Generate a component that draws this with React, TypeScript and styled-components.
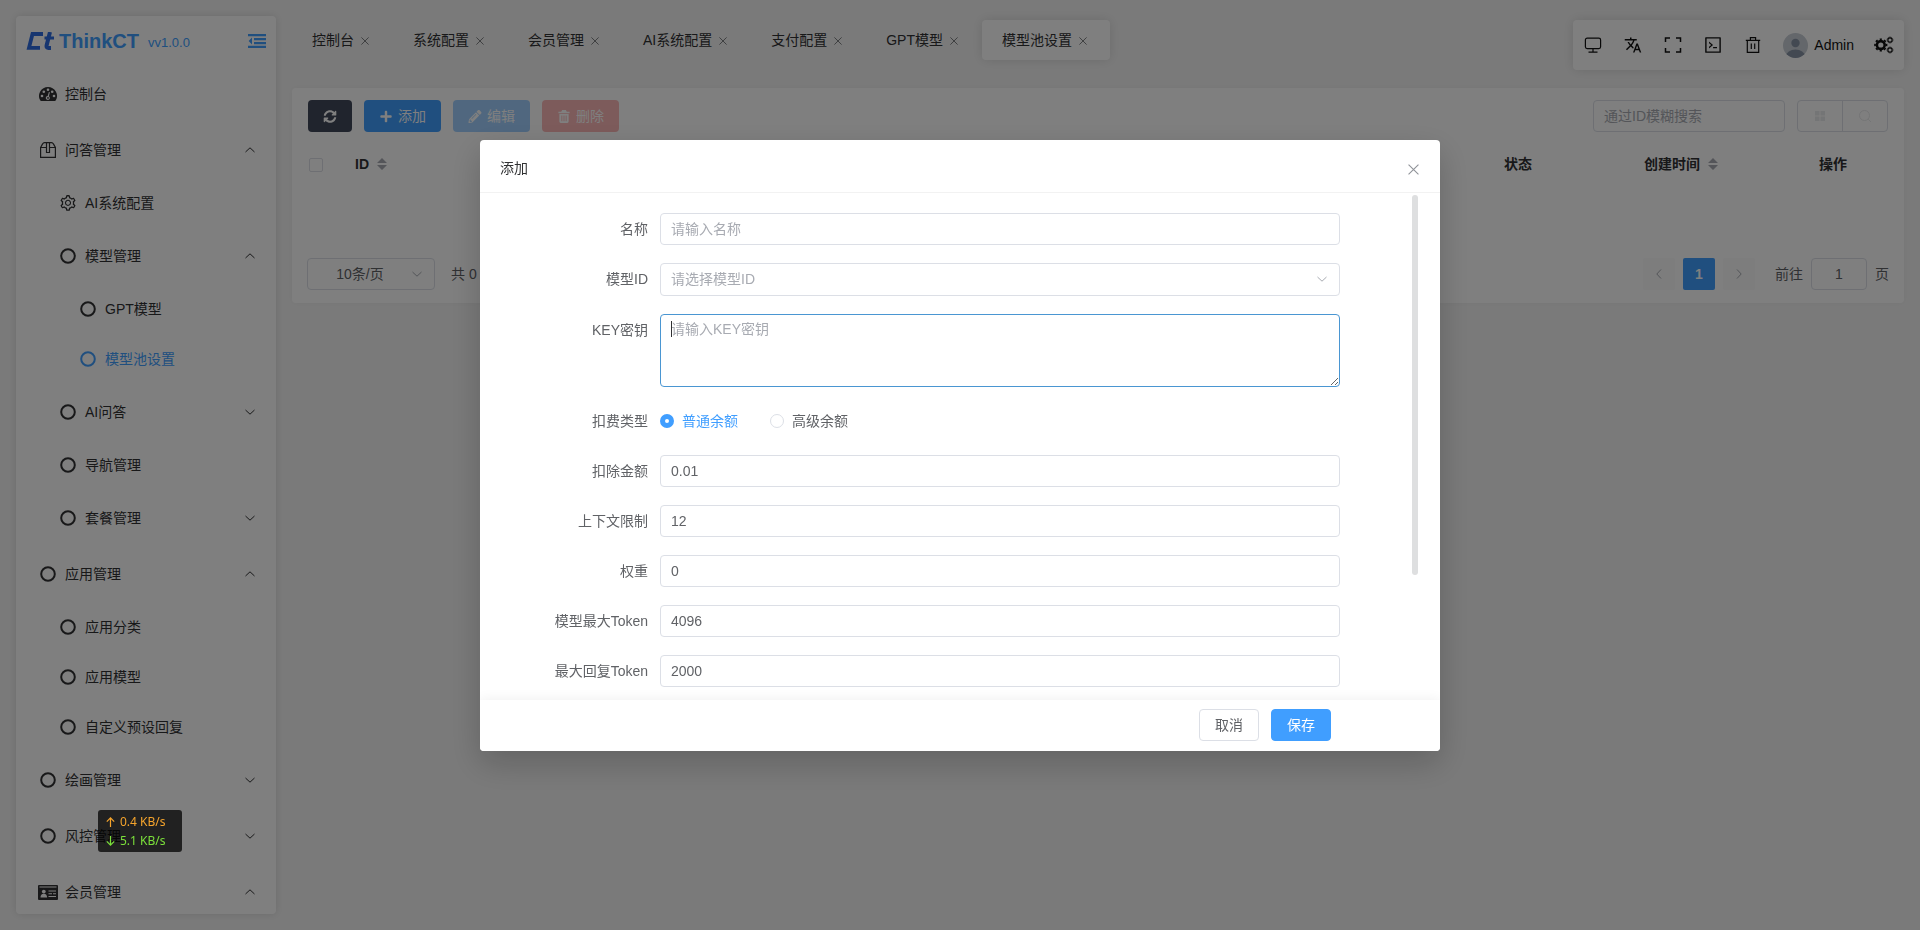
import React from 'react';
import styled, { createGlobalStyle, css } from 'styled-components';
import { FaPencilAlt, FaPlus, FaSyncAlt } from 'react-icons/fa';
import { AiOutlineCode, AiOutlineSetting } from 'react-icons/ai';
import { MdTranslate } from 'react-icons/md';

const color = {
  primary: '#409eff',
  text: '#303133',
  regular: '#606266',
  placeholder: '#a8abb2',
  border: '#dcdfe6',
  page: '#f5f5f5',
  card: '#ffffff',
};

const GlobalStyle = createGlobalStyle`
  *, *::before, *::after { box-sizing: border-box; }
  body {
    margin: 0;
    background: ${color.page};
    color: ${color.text};
    font: 14px/20px "Liberation Sans", "Noto Sans CJK SC", sans-serif;
  }
  button, input, select, textarea { font: inherit; color: inherit; margin: 0; }
  button { cursor: pointer; }
  a { color: inherit; text-decoration: none; }
`;

/* ---------- page shell ---------- */

const Shell = styled.div`
  display: grid;
  grid-template-columns: 260px minmax(0, 1fr);
  gap: 16px;
  height: 100vh;
  padding: 16px;
  overflow: hidden;
`;

const Sidebar = styled.aside`
  min-height: 0;
  overflow: hidden;
  background: ${color.card};
  border-radius: 4px;
  box-shadow: 0 0 8px rgba(0, 0, 0, 0.12);
`;

const Brand = styled.div`
  display: flex;
  align-items: center;
  height: 50px;
  padding: 0 10px;
  color: ${color.primary};
`;

const BrandName = styled.span`
  margin-left: 5px;
  font-size: 20px;
  font-weight: 700;
`;

const BrandVersion = styled.span`
  margin: 4px auto 0 9px;
  font-size: 13px;
`;

const IconButton = styled.button`
  display: inline-flex;
  align-items: center;
  justify-content: center;
  padding: 0;
  border: 0;
  background: none;
`;

const Menu = styled.ul`
  margin: 0;
  padding: 0;
  list-style: none;
`;

const MenuLink = styled.a<{ $level: number; $tall: boolean; $active?: boolean }>`
  display: flex;
  align-items: center;
  gap: 5px;
  height: ${(p) => (p.$tall ? 56 : 50)}px;
  padding: 0 20px 0 ${(p) => p.$level * 20}px;
  color: ${(p) => (p.$active ? color.primary : color.text)};
`;

const MenuIcon = styled.span`
  display: inline-flex;
  justify-content: center;
  width: 24px;
  font-size: 18px;
`;

const MenuText = styled.span`
  flex: 1;
`;

/* ---------- top bar ---------- */

const Main = styled.main`
  min-width: 0;
`;

const TopBar = styled.header`
  display: flex;
  justify-content: space-between;
  align-items: flex-start;
  height: 72px;
  padding-top: 4px;
`;

const Tabs = styled.nav`
  display: flex;
  gap: 1px;
`;

const Tab = styled.div<{ $active?: boolean }>`
  display: flex;
  align-items: center;
  gap: 4px;
  height: 40px;
  padding: 0 20px;
  white-space: nowrap;
  border-radius: 4px;
  ${(p) =>
    p.$active &&
    css`
      background: ${color.card};
      box-shadow: 0 0 12px rgba(0, 0, 0, 0.12);
    `}
`;

const TabClose = styled(IconButton)`
  width: 14px;
  height: 14px;
  padding-top: 2px;
  color: ${color.regular};
`;

const Tools = styled.div`
  display: flex;
  align-items: center;
  height: 50px;
  background: ${color.card};
  border-radius: 4px;
  box-shadow: 0 0 12px rgba(0, 0, 0, 0.12);
  color: #111;
`;

const Tool = styled(IconButton)`
  width: 40px;
  height: 50px;
  font-size: 18px;
`;

const Account = styled(IconButton)`
  gap: 6px;
  padding: 0 10px;
`;

/* ---------- content card ---------- */

const Card = styled.section`
  background: ${color.card};
  border-radius: 4px;
  box-shadow: 0 0 6px rgba(0, 0, 0, 0.04);
`;

const Toolbar = styled.div`
  display: flex;
  align-items: center;
  gap: 12px;
  padding: 12px 16px;
`;

const tones = {
  dark: '#40485b',
  primary: color.primary,
  primaryOff: '#a0cfff',
  dangerOff: '#fab6b6',
};

const ActionButton = styled.button<{ $tone: keyof typeof tones }>`
  display: inline-flex;
  align-items: center;
  justify-content: center;
  gap: 5px;
  height: 32px;
  padding: 0 15px;
  border: 0;
  border-radius: 4px;
  background: ${(p) => tones[p.$tone]};
  color: #fff;

  svg { width: 14px; height: 13px; }
`;

const Spacer = styled.span`
  flex: 1;
`;

const control = css`
  height: 32px;
  padding: 0 10px;
  border: 1px solid ${color.border};
  border-radius: 4px;
  background: ${color.card};
  color: ${color.regular};
  outline: none;

  &::placeholder { color: ${color.placeholder}; opacity: 1; }
`;

const SearchInput = styled.input`
  ${control}
  width: 192px;
`;

const ButtonGroup = styled.div`
  display: flex;
  border: 1px solid ${color.border};
  border-radius: 4px;
`;

const GroupButton = styled(IconButton)`
  width: 44px;
  height: 30px;
  color: #e9eaec;

  & + & { width: 45px; border-left: 1px solid ${color.border}; }
`;

const DataTable = styled.table`
  width: 100%;
  table-layout: fixed;
  border-collapse: collapse;

  th {
    height: 40px;
    padding: 0;
    font-weight: 700;
    text-align: center;
  }
  td { height: 61px; padding: 0; }
`;

const Col = styled.col<{ $width?: number }>`
  width: ${(p) => (p.$width ? `${p.$width}px` : 'auto')};
`;

const HeadLabel = styled.span`
  display: inline-flex;
  align-items: center;
  gap: 8px;
`;

const CheckBox = styled.input`
  appearance: none;
  display: block;
  width: 14px;
  height: 14px;
  margin: 2px auto 0;
  border: 1px solid ${color.border};
  border-radius: 2px;
`;

const Pager = styled.footer`
  display: flex;
  align-items: center;
  gap: 8px;
  padding: 13px 15px;
  color: ${color.regular};
`;

const SelectWrap = styled.span`
  position: relative;
  display: block;
`;

const SelectArrow = styled.span`
  position: absolute;
  top: 0;
  right: 12px;
  display: flex;
  align-items: center;
  height: 100%;
  color: ${color.placeholder};
  pointer-events: none;
`;

const PageSize = styled.select`
  ${control}
  appearance: none;
  display: block;
  width: 128px;
  padding-right: 32px;
  text-align-last: center;
`;

const Total = styled.span`
  margin-left: 8px;
`;

const PageButton = styled(IconButton)<{ $current?: boolean }>`
  width: 32px;
  height: 32px;
  border-radius: 2px;
  background: ${(p) => (p.$current ? color.primary : '#fafafb')};
  color: ${(p) => (p.$current ? '#fff' : color.placeholder)};
  font-weight: 700;
`;

const JumpLabel = styled.label`
  display: flex;
  align-items: center;
  gap: 8px;
  margin-left: 12px;
`;

const JumpInput = styled.input`
  ${control}
  width: 56px;
  text-align: center;
`;

/* ---------- dialog ---------- */

const Mask = styled.div`
  position: fixed;
  inset: 0;
  padding-top: 15vh;
  background: rgba(0, 0, 0, 0.5);
`;

const Dialog = styled.section`
  width: 50%;
  margin: 0 auto;
  overflow: hidden;
  background: #fff;
  border-radius: 4px;
  box-shadow: 0 12px 32px rgba(0, 0, 0, 0.2);
`;

const DialogHead = styled.header`
  display: flex;
  align-items: center;
  justify-content: space-between;
  height: 53px;
  padding: 4px 20px 0;
  border-bottom: 1px solid #f2f2f2;
`;

const DialogTitle = styled.h2`
  margin: 0;
  font-size: 14px;
  font-weight: 400;
`;

const DialogClose = styled(IconButton)`
  width: 14px;
  height: 16px;
  padding-top: 3px;
  color: #909399;
`;

const DialogBody = styled.div`
  position: relative;
  padding: 20px 20px 13px;
`;

const ScrollThumb = styled.span`
  position: absolute;
  top: 2px;
  right: 22px;
  width: 6px;
  height: 75%;
  border-radius: 4px;
  background: #dedfe0;
`;

const Form = styled.form`
  display: flex;
  flex-direction: column;
  gap: 18px;
  margin-right: 80px;
  color: ${color.regular};
`;

const FormRow = styled.div`
  display: grid;
  grid-template-columns: 148px minmax(0, 1fr);
  column-gap: 12px;
`;

const FormLabel = styled.label`
  line-height: 32px;
  text-align: right;
`;

const TextInput = styled.input`
  ${control}
  width: 100%;
`;

const FullSelect = styled.select`
  ${control}
  appearance: none;
  display: block;
  width: 100%;
  height: 33px;
  color: ${color.placeholder};
`;

const AreaWrap = styled.div`
  position: relative;
  height: 73px;
`;

const Area = styled.textarea`
  ${control}
  display: block;
  width: 100%;
  height: 73px;
  padding: 4px 10px;
  border-color: #4a96d2;
  resize: vertical;
  caret-color: transparent;
`;

const Caret = styled.span`
  position: absolute;
  top: 7px;
  left: 11px;
  width: 1px;
  height: 16px;
  background: ${color.text};
`;

const RadioRow = styled.div`
  display: flex;
  align-items: center;
  gap: 32px;
  height: 32px;
`;

const RadioLabel = styled.label`
  display: flex;
  align-items: center;
  gap: 8px;

  &:has(input:checked) { color: ${color.primary}; }
`;

const Radio = styled.input`
  appearance: none;
  width: 14px;
  height: 14px;
  border: 1px solid ${color.border};
  border-radius: 50%;

  &:checked { border: 5px solid ${color.primary}; }
`;

const DialogFoot = styled.footer`
  position: relative;
  display: flex;
  justify-content: flex-end;
  gap: 12px;
  padding: 9px 109px 10px;
  background: #fff;
  box-shadow: 0 0 12px rgba(0, 0, 0, 0.07);
`;

const FootButton = styled.button<{ $primary?: boolean }>`
  width: 60px;
  height: 32px;
  padding: 0;
  border: 1px solid ${(p) => (p.$primary ? color.primary : color.border)};
  border-radius: 4px;
  background: ${(p) => (p.$primary ? color.primary : '#fff')};
  color: ${(p) => (p.$primary ? '#fff' : color.regular)};
`;

/* ---------- floating network meter ---------- */

const Meter = styled.aside`
  position: fixed;
  left: 98px;
  bottom: 78px;
  width: 84px;
  padding: 2px 8px;
  border-radius: 3px;
  background: rgba(0, 0, 0, 0.74);
  font: 12px/19px "Noto Sans", "Open Sans", sans-serif;
`;

const MeterLine = styled.div<{ $up?: boolean }>`
  display: flex;
  align-items: center;
  gap: 5px;
  white-space: nowrap;
  color: ${(p) => (p.$up ? '#f5a42c' : '#7be03a')};
`;

/* ---------- drawings ---------- */

const BrandMark = () => (
  <svg width="28" height="18" viewBox="0 0 28 18" fill="none" stroke="#2f6de0">
    <path d="M17 2H6.5L3 15.8H14" strokeWidth="3.8" />
    <path d="M24 0L20.6 13.5Q20.2 16 22.5 16H25" strokeWidth="4" />
    <path d="M18.5 6H28" strokeWidth="3" />
  </svg>
);

const FoldIcon = () => (
  <svg width="18" height="14" viewBox="0 0 18 14" fill="currentColor">
    <path d="M0 0h18v2.2H0zM6 4h12v2.2H6zM6 8h12v2.2H6zM0 11.8h18V14H0zM4 3.6v6.8L0.6 7z" />
  </svg>
);

const Dashboard = () => (
  <svg width="18" height="14" viewBox="0 0 18 14">
    <path fill="currentColor" d="M9 0a9 9 0 0 1 7.7 13.6q-.3.4-.8.4H2.1q-.5 0-.8-.4A9 9 0 0 1 9 0z" />
    <g fill="#fff">
      <circle cx="3" cy="9" r="1.3" />
      <circle cx="4.8" cy="4.7" r="1.3" />
      <circle cx="9" cy="2.8" r="1.3" />
      <circle cx="13.2" cy="4.7" r="1.3" />
      <circle cx="15" cy="9" r="1.3" />
      <path d="M9.9 4.900l1 .3-1 4a2 2 0 1 1-1.2-.3z" />
    </g>
    <circle cx="9" cy="10.9" r="0.9" fill="currentColor" />
  </svg>
);

const BoxIcon = () => (
  <svg width="18" height="18" viewBox="0 0 18 18" fill="none" stroke="currentColor" strokeWidth="1.2">
    <path d="M1.6 6.5L3.6 2.900Q4.2 1.7 5.5 1.7H12.5Q13.8 1.7 14.4 2.900L16.4 6.5V16.4H1.6z" />
    <path d="M1.6 6.5H7.5M10.5 6.5H16.4" />
    <path d="M7.5 1.7V11.5H10.5V1.7" />
  </svg>
);

const RingIcon = () => (
  <svg width="16" height="16" viewBox="0 0 16 16" fill="none" stroke="currentColor" strokeWidth="2">
    <circle cx="8" cy="8" r="6.8" />
  </svg>
);

const CardIcon = () => (
  <svg width="20" height="15" viewBox="0 0 20 15">
    <rect width="20" height="15" rx="1" fill="currentColor" />
    <g fill="#fff">
      <path d="M1.5 1.5h17v1h-17z" />
      <circle cx="5.8" cy="6.6" r="1.9" />
      <path d="M2.5 12.5q0-3.8 3.3-3.8t3.3 3.8z" />
      <path d="M10.5 5.5h7.5v1h-7.5zM10.5 8.2h3.5v1h-3.5zM15 8.2h3v1h-3zM10.5 11h7.5v1h-7.5z" />
    </g>
  </svg>
);

type Dir = 'up' | 'down' | 'left' | 'right';
const chevrons: Record<Dir, string> = {
  up: 'M1.5 8L6 3.8L10.5 8',
  down: 'M1.5 4L6 8.2L10.5 4',
  left: 'M8 1.5L3.8 6L8 10.5',
  right: 'M4 1.5L8.2 6L4 10.5',
};
const Chevron = ({ dir }: { dir: Dir }) => (
  <svg width="12" height="12" viewBox="0 0 12 12" fill="none" stroke="currentColor">
    <path d={chevrons[dir]} />
  </svg>
);

const Cross = ({ size }: { size: number }) => (
  <svg width={size} height={size} viewBox="0 0 10 10" fill="none" stroke="currentColor" strokeWidth="1">
    <path d="M.5.5L9.5 9.5M9.5.5L.5 9.5" />
  </svg>
);

const SortIcon = () => (
  <svg width="10" height="12" viewBox="0 0 10 12" fill="#a8abb2">
    <path d="M5 0L10 5H0zM0 7H10L5 12z" />
  </svg>
);

const TrashIcon = () => (
  <svg viewBox="0 0 14 14" fill="currentColor">
    <path
      fillRule="evenodd"
      d="M5 0h4l1 2h3v1.5H1V2h3zM2 4.2h10V12.500q0 1.500-1.500 1.500h-7Q2 14 2 12.500zM4.200 6v6h1V6zM6.500 6v6h1V6zM8.800 6v6h1V6z"
    />
  </svg>
);

const MonitorIcon = () => (
  <svg width="18" height="18" viewBox="0 0 18 18" fill="none" stroke="currentColor" strokeWidth="1.2">
    <rect x="1.4" y="2.2" width="15.2" height="10.4" rx="1.8" />
    <path d="M9 12.6V16M4.5 16.2H13.5" />
  </svg>
);

const FullscreenIcon = () => (
  <svg width="18" height="16" viewBox="0 0 18 16" fill="none" stroke="currentColor" strokeWidth="1.5">
    <path d="M1.5 5V1H6M12 1H16.5V5M16.5 11V15H12M6 15H1.5V11" />
  </svg>
);

const BinIcon = () => (
  <svg width="18" height="18" viewBox="0 0 18 18" fill="none" stroke="currentColor" strokeWidth="1.2">
    <path d="M1.8 4.4H16.2M6.4 4.4V1.7H11.6V4.4M3.3 4.4V16.3H14.7V4.4M7.3 7.4V13M10.7 7.4V13" />
  </svg>
);

const Gear = ({ x, y, r, ring, tooth }: { x: number; y: number; r: number; ring: number; tooth: number }) => (
  <>
    <circle cx={x} cy={y} r={r} strokeWidth={ring} />
    <circle
      cx={x}
      cy={y}
      r={r + (ring + tooth) / 2 - 0.2}
      strokeWidth={tooth}
      pathLength={16}
      strokeDasharray="1 1"
      strokeDashoffset="0.5"
    />
  </>
);

const GearsIcon = () => (
  <svg width="20" height="18" viewBox="0 0 20 18" fill="none" stroke="currentColor">
    <Gear x={6.8} y={9} r={3.9} ring={2.6} tooth={1.6} />
    <Gear x={16} y={4} r={2.1} ring={1.1} tooth={1} />
    <Gear x={16} y={14} r={2.1} ring={1.1} tooth={1} />
  </svg>
);

const Avatar = () => (
  <svg width="25" height="25" viewBox="0 0 25 25">
    <clipPath id="avatarClip">
      <circle cx="12.5" cy="12.5" r="12.5" />
    </clipPath>
    <g clipPath="url(#avatarClip)">
      <rect width="25" height="25" fill="#c8ced6" />
      <circle cx="12.5" cy="10" r="4.2" fill="#8793a5" />
      <ellipse cx="12.5" cy="23" rx="9.5" ry="6.5" fill="#8793a5" />
    </g>
  </svg>
);

const GridIcon = () => (
  <svg width="12" height="12" viewBox="0 0 12 12" fill="currentColor">
    <path d="M1 1h4.5v4.5H1zM6.5 1H11v4.5H6.500zM1 6.5h4.5V11H1zM6.5 6.5H11V11H6.500z" />
  </svg>
);

const SearchIcon = () => (
  <svg width="14" height="14" viewBox="0 0 14 14" fill="none" stroke="currentColor">
    <circle cx="6.5" cy="6.5" r="5" />
    <path d="M10.2 10.2L13 13" />
  </svg>
);

const Arrow = ({ up }: { up?: boolean }) => (
  <svg width="9" height="10" viewBox="0 0 9 10" fill="none" stroke="currentColor" strokeWidth="1.2">
    <path d={up ? 'M4.5 10V1M.8 4.6L4.5.9L8.2 4.6' : 'M4.5 0V9M.8 5.4L4.5 9.1L8.2 5.4'} />
  </svg>
);

/* ---------- data ---------- */

interface Entry {
  label: string;
  level: number;
  icon?: React.ReactNode;
  arrow?: Dir;
  active?: boolean;
}

const menu: Entry[] = [
  { label: '控制台', level: 1, icon: <Dashboard /> },
  { label: '问答管理', level: 1, icon: <BoxIcon />, arrow: 'up' },
  { label: 'AI系统配置', level: 2, icon: <AiOutlineSetting /> },
  { label: '模型管理', level: 2, arrow: 'up' },
  { label: 'GPT模型', level: 3 },
  { label: '模型池设置', level: 3, active: true },
  { label: 'AI问答', level: 2, arrow: 'down' },
  { label: '导航管理', level: 2 },
  { label: '套餐管理', level: 2, arrow: 'down' },
  { label: '应用管理', level: 1, arrow: 'up' },
  { label: '应用分类', level: 2 },
  { label: '应用模型', level: 2 },
  { label: '自定义预设回复', level: 2 },
  { label: '绘画管理', level: 1, arrow: 'down' },
  { label: '风控管理', level: 1, arrow: 'down' },
  { label: '会员管理', level: 1, icon: <CardIcon />, arrow: 'up' },
];

const tabs = ['控制台', '系统配置', '会员管理', 'AI系统配置', '支付配置', 'GPT模型', '模型池设置'];

const numberFields = [
  { id: 'amount', label: '扣除金额', value: '0.01' },
  { id: 'context', label: '上下文限制', value: '12' },
  { id: 'weight', label: '权重', value: '0' },
  { id: 'maxToken', label: '模型最大Token', value: '4096' },
  { id: 'replyToken', label: '最大回复Token', value: '2000' },
];

/* ---------- parts ---------- */

const SideMenu = () => (
  <Sidebar>
    <Brand>
      <BrandMark />
      <BrandName>ThinkCT</BrandName>
      <BrandVersion>vv1.0.0</BrandVersion>
      <IconButton aria-label="收起菜单">
        <FoldIcon />
      </IconButton>
    </Brand>
    <Menu>
      {menu.map((item) => (
        <li key={item.label}>
          <MenuLink
            href="#"
            $level={item.level}
            $tall={item.level === 1 || !!item.arrow}
            $active={item.active}
          >
            <MenuIcon>{item.icon ?? <RingIcon />}</MenuIcon>
            <MenuText>{item.label}</MenuText>
            {item.arrow && <Chevron dir={item.arrow} />}
          </MenuLink>
        </li>
      ))}
    </Menu>
  </Sidebar>
);

const Header = () => (
  <TopBar>
    <Tabs>
      {tabs.map((name, i) => (
        <Tab key={name} $active={i === tabs.length - 1}>
          <a href="#">{name}</a>
          <TabClose aria-label={`关闭${name}`}>
            <Cross size={8} />
          </TabClose>
        </Tab>
      ))}
    </Tabs>
    <Tools>
      <Tool aria-label="首页"><MonitorIcon /></Tool>
      <Tool aria-label="语言"><MdTranslate /></Tool>
      <Tool aria-label="全屏"><FullscreenIcon /></Tool>
      <Tool aria-label="终端"><AiOutlineCode size={20} /></Tool>
      <Tool aria-label="清理缓存"><BinIcon /></Tool>
      <Account>
        <Avatar />
        Admin
      </Account>
      <Tool aria-label="布局配置"><GearsIcon /></Tool>
    </Tools>
  </TopBar>
);

const TableCard = () => (
  <Card>
    <Toolbar>
      <ActionButton $tone="dark" aria-label="刷新"><FaSyncAlt /></ActionButton>
      <ActionButton $tone="primary"><FaPlus />添加</ActionButton>
      <ActionButton $tone="primaryOff" disabled><FaPencilAlt />编辑</ActionButton>
      <ActionButton $tone="dangerOff" disabled><TrashIcon />删除</ActionButton>
      <Spacer />
      <SearchInput aria-label="搜索" placeholder="通过ID模糊搜索" />
      <ButtonGroup>
        <GroupButton aria-label="列显示"><GridIcon /></GroupButton>
        <GroupButton aria-label="通用搜索"><SearchIcon /></GroupButton>
      </ButtonGroup>
    </Toolbar>
    <DataTable>
      <colgroup>
        <Col $width={48} />
        <Col $width={62} />
        <Col />
        <Col $width={164} />
        <Col $width={162} />
        <Col $width={142} />
      </colgroup>
      <thead>
        <tr>
          <th><CheckBox type="checkbox" aria-label="全选" /></th>
          <th><HeadLabel>ID<SortIcon /></HeadLabel></th>
          <th />
          <th>状态</th>
          <th><HeadLabel>创建时间<SortIcon /></HeadLabel></th>
          <th>操作</th>
        </tr>
      </thead>
      <tbody>
        <tr><td colSpan={6} /></tr>
      </tbody>
    </DataTable>
    <Pager>
      <SelectWrap>
        <PageSize aria-label="每页条数"><option>10条/页</option></PageSize>
        <SelectArrow><Chevron dir="down" /></SelectArrow>
      </SelectWrap>
      <Total>共 0 条</Total>
      <Spacer />
      <PageButton aria-label="上一页"><Chevron dir="left" /></PageButton>
      <PageButton $current>1</PageButton>
      <PageButton aria-label="下一页"><Chevron dir="right" /></PageButton>
      <JumpLabel>
        前往
        <JumpInput defaultValue="1" />
        页
      </JumpLabel>
    </Pager>
  </Card>
);

const AddDialog = () => (
  <Mask>
    <Dialog role="dialog" aria-labelledby="dialogTitle">
      <DialogHead>
        <DialogTitle id="dialogTitle">添加</DialogTitle>
        <DialogClose aria-label="关闭"><Cross size={11} /></DialogClose>
      </DialogHead>
      <DialogBody>
        <Form>
          <FormRow>
            <FormLabel htmlFor="name">名称</FormLabel>
            <TextInput id="name" placeholder="请输入名称" />
          </FormRow>
          <FormRow>
            <FormLabel htmlFor="model">模型ID</FormLabel>
            <SelectWrap>
              <FullSelect id="model"><option>请选择模型ID</option></FullSelect>
              <SelectArrow><Chevron dir="down" /></SelectArrow>
            </SelectWrap>
          </FormRow>
          <FormRow>
            <FormLabel htmlFor="secret">KEY密钥</FormLabel>
            <AreaWrap>
              <Area id="secret" placeholder="请输入KEY密钥" />
              <Caret />
            </AreaWrap>
          </FormRow>
          <FormRow role="radiogroup" aria-labelledby="feeLabel">
            <FormLabel as="span" id="feeLabel">扣费类型</FormLabel>
            <RadioRow>
              <RadioLabel><Radio type="radio" name="fee" defaultChecked />普通余额</RadioLabel>
              <RadioLabel><Radio type="radio" name="fee" />高级余额</RadioLabel>
            </RadioRow>
          </FormRow>
          {numberFields.map((f) => (
            <FormRow key={f.id}>
              <FormLabel htmlFor={f.id}>{f.label}</FormLabel>
              <TextInput id={f.id} defaultValue={f.value} />
            </FormRow>
          ))}
        </Form>
        <ScrollThumb />
      </DialogBody>
      <DialogFoot>
        <FootButton>取消</FootButton>
        <FootButton $primary>保存</FootButton>
      </DialogFoot>
    </Dialog>
  </Mask>
);

export default function App() {
  return (
    <>
      <GlobalStyle />
      <Shell>
        <SideMenu />
        <Main>
          <Header />
          <TableCard />
        </Main>
      </Shell>
      <AddDialog />
      <Meter>
        <MeterLine $up><Arrow up />0.4 KB/s</MeterLine>
        <MeterLine><Arrow />5.1 KB/s</MeterLine>
      </Meter>
    </>
  );
}
